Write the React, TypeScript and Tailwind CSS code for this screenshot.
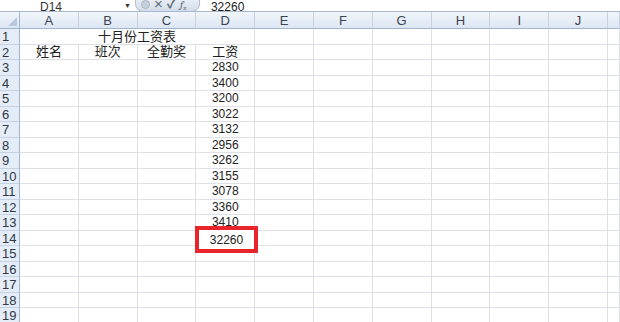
import React from "react";

const cols = ["A", "B", "C", "D", "E", "F", "G", "H", "I", "J", ""];
const wages = ["2830", "3400", "3200", "3022", "3132", "2956", "3262", "3155", "3078", "3360", "3410"];
const rows = Array.from({ length: 19 }, (_, i) => i + 1);

const font = { fontFamily: '"Liberation Sans", "Noto Sans CJK SC", sans-serif' };

function cellText(row: number, col: number): string {
  if (row === 2) return ["姓名", "班次", "全勤奖", "工资"][col] ?? "";
  // D14 is drawn by the red box overlay
  if (col === 3 && row >= 3 && row <= 13) return wages[row - 3];
  return "";
}

export default function App() {
  return (
    <div className="relative w-[620px] h-[322px] overflow-hidden bg-white text-[12px] text-[#222]" style={font}>
      {/* formula bar, cut off at the top */}
      <div className="h-[12px] flex items-end overflow-hidden border-b border-[#a9bad0] bg-white">
        <span className="ml-[40px] w-[80px] leading-[14px] -mb-[3px] text-[#333]">D14</span>
        <span className="ml-[4px] text-[7px] leading-[10px] text-[#333]">▼</span>
        <div className="ml-[4px] h-[16px] w-[65px] -mb-[1px] rounded-b-[8px] border border-[#b0bfd2] bg-gradient-to-b from-[#eef2f8] to-[#d3dce9] flex items-end pb-[1px] pl-[5px] gap-[4px] text-[#5f6a78]">
          <span className="w-[9px] h-[9px] mb-[1px] rounded-full bg-[#c6d0dc] border border-[#aab5c3]" />
          <span className="text-[15px] leading-[12px]">×</span>
          <span className="text-[13px] leading-[12px] font-bold">✓</span>
          <span className="text-[11px] leading-[11px] italic font-serif">f<sub className="text-[7px]">x</sub></span>
        </div>
        <span className="ml-[11px] leading-[14px] -mb-[3px] text-[#222]">32260</span>
      </div>

      {/* sheet grid */}
      <div className="grid grid-cols-[20px_repeat(10,58.8px)_1fr] grid-rows-[17px_repeat(19,15.5px)]">
        <div className="relative bg-gradient-to-b from-[#f2f6fb] to-[#dce6f3] border-r border-b border-[#9fb5cd]">
          <div className="absolute right-[2px] bottom-[2px] w-0 h-0 border-l-[9px] border-l-transparent border-b-[9px] border-b-[#b8c9dd]" />
        </div>
        {cols.map((c, i) => (
          <div
            key={"h" + i}
            className="bg-gradient-to-b from-[#f2f6fb] to-[#dce6f3] border-r border-b border-r-[#c5d2e2] border-b-[#9fb5cd] flex items-center justify-center text-[13px] text-[#3a4452] leading-none"
          >
            {c}
          </div>
        ))}
        {rows.map((r) => (
          <React.Fragment key={r}>
            <div className="bg-[#e4ecf7] border-r border-b border-r-[#9fb5cd] border-b-[#c5d2e2] pl-[2px] text-[13px] leading-[15px] text-[#2f3845]">
              {r}
            </div>
            {r === 1 ? (
              <>
                <div className="col-span-4 border-r border-b border-[#dde1e7] flex items-center justify-center text-[13px] leading-none">
                  十月份工资表
                </div>
                {cols.slice(4).map((_, i) => (
                  <div key={i} className="border-r border-b border-[#dde1e7]" />
                ))}
              </>
            ) : (
              cols.map((_, i) => (
                <div
                  key={i}
                  className={
                    "border-r border-b border-[#dde1e7] flex items-center justify-center leading-none " +
                    (r === 2 ? "text-[13px]" : "text-[12px]")
                  }
                >
                  {cellText(r, i)}
                </div>
              ))
            )}
          </React.Fragment>
        ))}
      </div>

      {/* red annotation box around D14 */}
      <div className="absolute left-[195px] top-[226px] w-[63px] h-[27px] border-4 border-[#e8252b] bg-white flex items-center justify-center text-[12px] leading-none text-[#222]">
        32260
      </div>
    </div>
  );
}
